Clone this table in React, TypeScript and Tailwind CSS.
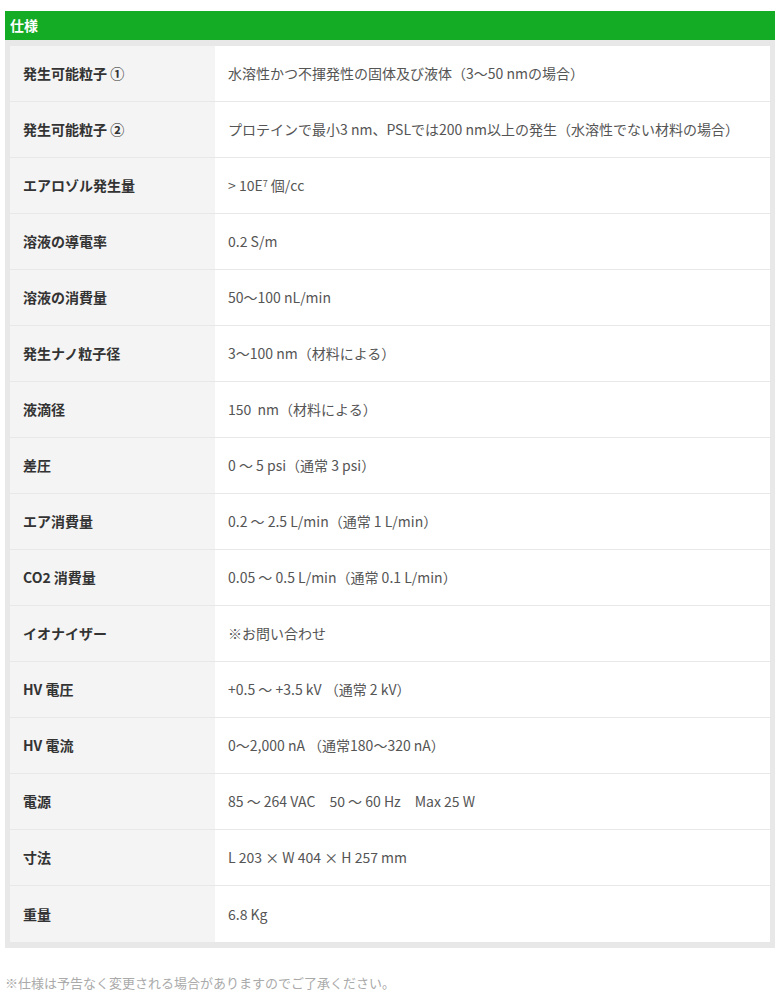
import React from "react";

type Row = { label: string; value: React.ReactNode };

const rows: Row[] = [
  { label: "発生可能粒子 ①", value: "水溶性かつ不揮発性の固体及び液体（3〜50 nmの場合）" },
  { label: "発生可能粒子 ②", value: "プロテインで最小3 nm、PSLでは200 nm以上の発生（水溶性でない材料の場合）" },
  {
    label: "エアロゾル発生量",
    value: (
      <>
        &gt; 10E<sup className="text-[9px] -top-[0.5em]">7</sup> 個/cc
      </>
    ),
  },
  { label: "溶液の導電率", value: "0.2 S/m" },
  { label: "溶液の消費量", value: "50〜100 nL/min" },
  { label: "発生ナノ粒子径", value: "3〜100 nm（材料による）" },
  { label: "液滴径", value: "150  nm（材料による）" },
  { label: "差圧", value: "0 〜 5 psi（通常 3 psi）" },
  { label: "エア消費量", value: "0.2 〜 2.5 L/min（通常 1 L/min）" },
  { label: "CO2 消費量", value: "0.05 〜 0.5 L/min（通常 0.1 L/min）" },
  { label: "イオナイザー", value: "※お問い合わせ" },
  { label: "HV 電圧", value: "+0.5 〜 +3.5 kV （通常 2 kV）" },
  { label: "HV 電流", value: "0〜2,000 nA （通常180〜320 nA）" },
  { label: "電源", value: "85 〜 264 VAC　50 〜 60 Hz　Max 25 W" },
  { label: "寸法", value: "L 203 × W 404 × H 257 mm" },
  { label: "重量", value: "6.8 Kg" },
];

export default function App() {
  return (
    <div
      className="min-h-[994px] w-[784px] bg-white px-[5px] pt-[11px]"
      style={{ fontFamily: '"Noto Sans CJK JP", "Noto Sans", sans-serif' }}
    >
      <div className="w-[770px]">
        <div className="flex h-[29px] items-center bg-[#14ab25] px-[5px] text-[14px] font-bold text-white">
          仕様
        </div>
        <div className="bg-[#e8e8e8] px-[5px] pt-[6px] pb-[6px]">
          {rows.map((r, i) => (
            <div
              key={r.label}
              className={
                "flex h-[56px] " + (i < rows.length - 1 ? "border-b border-[#e8e8e8]" : "")
              }
            >
              <div className="flex w-[205px] shrink-0 items-center bg-[#f4f4f4] pl-[13px] text-[14px] font-bold text-[#333]">
                {r.label}
              </div>
              <div className="flex flex-1 items-center whitespace-pre bg-white pl-[13px] text-[14px] text-[#555]">
                <span className="relative">{r.value}</span>
              </div>
            </div>
          ))}
        </div>
      </div>
      <div className="mt-[25px] text-[13px] text-[#aaa]">
        ※仕様は予告なく変更される場合がありますのでご了承ください。
      </div>
    </div>
  );
}
